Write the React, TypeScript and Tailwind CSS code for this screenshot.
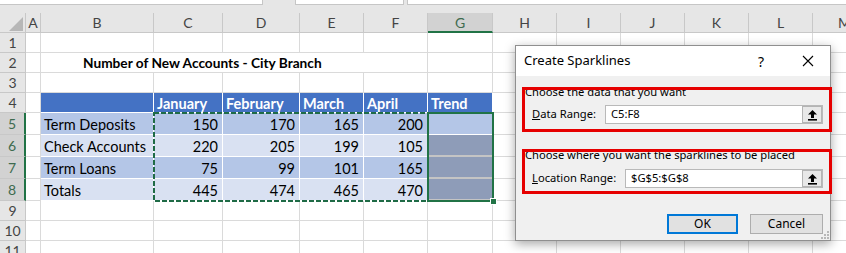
import React from "react";

const cols = [
  { k: "A", w: 15 },
  { k: "B", w: 113 },
  { k: "C", w: 69 },
  { k: "D", w: 77 },
  { k: "E", w: 64 },
  { k: "F", w: 64 },
  { k: "G", w: 65 },
  { k: "H", w: 64 },
  { k: "I", w: 64 },
  { k: "J", w: 64 },
  { k: "K", w: 64 },
  { k: "L", w: 64 },
  { k: "M", w: 64 },
];

const data = [
  { label: "Term Deposits", vals: [150, 170, 165, 200] },
  { label: "Check Accounts", vals: [220, 205, 199, 105] },
  { label: "Term Loans", vals: [75, 99, 101, 165] },
  { label: "Totals", vals: [445, 474, 465, 470] },
];

type CellProps = {
  w: number;
  className?: string;
  children?: React.ReactNode;
};

function Cell({ w, className = "border-r border-b border-[#dadada]", children }: CellProps) {
  return (
    <div
      className={`h-full shrink-0 flex items-center overflow-visible whitespace-nowrap ${className}`}
      style={{ width: w }}
    >
      {children}
    </div>
  );
}

function RowHead({ n, selected }: { n: number; selected?: boolean }) {
  return (
    <div
      className={`w-[26px] h-full shrink-0 flex items-center justify-center text-[14px] border-b border-[#c8c8c8] ${
        selected
          ? "bg-[#d2d2d2] text-[#3e6b4f] border-r-2 border-r-[#217346]"
          : "bg-[#e6e6e6] text-[#444] border-r border-r-[#c8c8c8]"
      }`}
    >
      {n}
    </div>
  );
}

function BlankCells({ from }: { from: number }) {
  return (
    <>
      {cols.slice(from).map((c) => (
        <Cell key={c.k} w={c.w} />
      ))}
    </>
  );
}

function UpButton() {
  return (
    <div className="w-[20px] h-full shrink-0 flex items-center justify-center bg-[#e8e8e8] border border-[#b4b4b4]">
      <svg width="11" height="12" viewBox="0 0 11 12">
        <path d="M5.5 1 L10 5.5 H7 V9 H4 V5.5 H1 Z" fill="#000" />
        <rect x="1" y="10" width="9" height="1.6" fill="#000" />
      </svg>
    </div>
  );
}

export default function App() {
  return (
    <div className="relative w-[846px] h-[253px] overflow-hidden bg-white font-['Lato',sans-serif]">
      {/* formula bar edge */}
      <div className="h-[13px] bg-[#e6e6e6] flex items-start">
        <div className="w-[263px] h-[5px] bg-white border-r border-b border-[#c6c6c6]" />
        <div className="w-[32px]" />
        <div className="w-[109px] h-[5px] bg-white border-x border-b border-[#c6c6c6]" />
        <div className="w-[3px]" />
        <div className="flex-1 h-[5px] bg-white border-l border-b border-[#c6c6c6]" />
      </div>

      {/* column headers */}
      <div className="flex h-[20px] bg-[#e6e6e6] text-[14px] text-[#444]">
        <div className="w-[26px] h-full shrink-0 relative border-r border-b border-[#c8c8c8]">
          <svg className="absolute left-[9px] top-[4px]" width="14" height="14" viewBox="0 0 14 14">
            <polygon points="14,0 14,14 0,14" fill="#b7b7b7" />
          </svg>
        </div>
        {cols.map((c) => (
          <div
            key={c.k}
            className={`h-full shrink-0 flex items-center justify-center border-r border-[#c8c8c8] ${
              c.k === "G"
                ? "bg-[#d2d2d2] text-[#3e6b4f] border-b-2 border-b-[#217346]"
                : "border-b border-b-[#c8c8c8]"
            }`}
            style={{ width: c.w }}
          >
            {c.k}
          </div>
        ))}
      </div>

      {/* row 1 */}
      <div className="flex h-[20px]">
        <RowHead n={1} />
        <BlankCells from={0} />
      </div>

      {/* row 2 title */}
      <div className="flex h-[20px] text-[13.7px]">
        <RowHead n={2} />
        <Cell w={15} />
        <Cell w={387} className="border-r border-b border-[#dadada] pl-[42px] pt-[1px] font-bold">
          Number of New Accounts - City Branch
        </Cell>
        <BlankCells from={6} />
      </div>

      {/* row 3 */}
      <div className="flex h-[20px]">
        <RowHead n={3} />
        <BlankCells from={0} />
      </div>

      {/* row 4 table header */}
      <div className="flex h-[20px] text-[14.5px]">
        <RowHead n={4} />
        <Cell w={15} />
        {["", "January", "February", "March", "April", "Trend"].map((t, i) => (
          <Cell
            key={i}
            w={cols[i + 1].w}
            className="bg-[#4472c4] text-white font-bold pl-[3px] pt-[2px] border-r border-b border-white"
          >
            {t}
          </Cell>
        ))}
        <BlankCells from={7} />
      </div>

      {/* rows 5-8 */}
      {data.map((r, ri) => {
        const band = ri % 2 === 0 ? "bg-[#b4c6e7]" : "bg-[#d9e1f2]";
        return (
          <div key={r.label} className="flex h-[22px] text-[14.5px] text-black">
            <RowHead n={ri + 5} selected />
            <Cell w={15} />
            <Cell w={113} className={`${band} pl-[3px] pt-[3px] border-r border-b border-white`}>
              {r.label}
            </Cell>
            {r.vals.map((v, vi) => (
              <Cell
                key={vi}
                w={cols[vi + 2].w}
                className={`${band} justify-end pr-[4px] pt-[3px] border-r border-b border-white`}
              >
                {v}
              </Cell>
            ))}
            <Cell
              w={65}
              className={
                ri === 0
                  ? "bg-[#b4c6e7] border-r border-b border-white"
                  : "bg-[#8e9cb8] border-r border-b-2 border-[#c4c4c4]"
              }
            />
            <BlankCells from={7} />
          </div>
        );
      })}

      {/* rows 9-11 */}
      {[9, 10, 11].map((n) => (
        <div key={n} className="flex h-[20px]">
          <RowHead n={n} />
          <BlankCells from={0} />
        </div>
      ))}

      {/* copy marquee C5:F8 */}
      <svg className="absolute left-[153px] top-[112px]" width="276" height="90" viewBox="0 0 276 90">
        <rect
          x="1"
          y="1"
          width="274"
          height="88"
          fill="none"
          stroke="#1f6b46"
          strokeWidth="2"
          strokeDasharray="5 2"
        />
      </svg>

      {/* selection G5:G8 */}
      <div className="absolute left-[427px] top-[112px] w-[67px] h-[90px] border-2 border-[#217346]" />
      <div className="absolute left-[490px] top-[198px] w-[7px] h-[7px] bg-[#217346] border border-white" />

      {/* dialog */}
      <div className="absolute left-[515px] top-[45px] w-[316px] h-[196px] flex flex-col border border-[#8f8f8f] bg-[#f0f0f0] shadow-[0_3px_10px_rgba(0,0,0,0.35)] font-['Noto_Sans',sans-serif] text-black">
        <div className="h-[30px] bg-white flex items-center pl-[8px] text-[13px]">
          <span>Create Sparklines</span>
          <span className="ml-auto mr-[38px] text-[14px]">?</span>
          <svg className="mr-[16px]" width="12" height="12" viewBox="0 0 12 12">
            <path d="M1 1 L11 11 M11 1 L1 11" stroke="#000" strokeWidth="1.1" />
          </svg>
        </div>
        <div className="flex-1 px-[7px] text-[11.2px]">
          <div className="h-[14px] leading-[14px] mt-[9px] pl-[2px]">Choose the data that you want</div>
          <div className="flex items-center h-[19px] mt-[6px]">
            <span className="w-[82px] pl-[9px]">
              <span className="underline">D</span>ata Range:
            </span>
            <div className="flex-1 h-full flex items-center bg-white border border-[#b9b9b9] pl-[5px]">
              <span className="flex-1">C5:F8</span>
              <UpButton />
            </div>
          </div>
          <div className="h-[14px] leading-[14px] mt-[24px] pl-[2px]">
            Choose where you want the sparklines to be placed
          </div>
          <div className="flex items-center h-[19px] mt-[7px]">
            <span className="w-[102px] pl-[9px]">
              <span className="underline">L</span>ocation Range:
            </span>
            <div className="flex-1 h-full flex items-center bg-white border border-[#b9b9b9] pl-[5px]">
              <span className="flex-1">$G$5:$G$8</span>
              <UpButton />
            </div>
          </div>
          <div className="flex justify-end gap-[12px] mt-[26px] text-[12px]">
            <div className="w-[71px] h-[20px] flex items-center justify-center bg-[#e1e1e1] border-2 border-[#0078d7]">
              OK
            </div>
            <div className="w-[73px] h-[20px] flex items-center justify-center bg-[#e1e1e1] border border-[#adadad]">
              Cancel
            </div>
          </div>
        </div>
        <svg className="absolute right-[1px] bottom-[1px]" width="8" height="8" viewBox="0 0 8 8">
          <rect x="6" y="0" width="2" height="2" fill="#b8b8b8" />
          <rect x="3" y="3" width="2" height="2" fill="#b8b8b8" />
          <rect x="6" y="3" width="2" height="2" fill="#b8b8b8" />
          <rect x="0" y="6" width="2" height="2" fill="#b8b8b8" />
          <rect x="3" y="6" width="2" height="2" fill="#b8b8b8" />
          <rect x="6" y="6" width="2" height="2" fill="#b8b8b8" />
        </svg>
      </div>

      {/* red annotation boxes */}
      <div className="absolute left-[522px] top-[87px] w-[310px] h-[45px] border-[3px] border-[#e60000]" />
      <div className="absolute left-[522px] top-[149px] w-[310px] h-[45px] border-[3px] border-[#e60000]" />
    </div>
  );
}
